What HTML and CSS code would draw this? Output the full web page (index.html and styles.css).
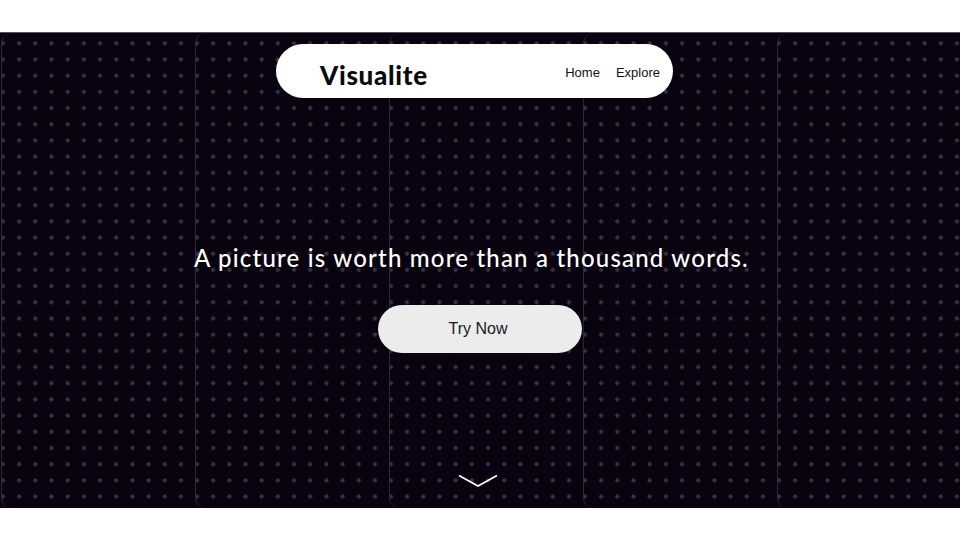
FILE: index.html
```html
<!DOCTYPE html>
<html lang="en">
<head>
<meta charset="utf-8">
<title>Visualite</title>
<link rel="stylesheet" href="styles.css">
</head>
<body>
<section class="hero">
  <div class="panels">
    <div class="panel"></div>
    <div class="panel"></div>
    <div class="panel"></div>
    <div class="panel"></div>
    <div class="panel"></div>
  </div>
  <div class="content">
    <nav class="navbar">
      <span class="brand">Visualite</span>
      <div class="links">
        <a class="link" href="#">Home</a>
        <a class="link" href="#">Explore</a>
      </div>
    </nav>
    <h1 class="headline">A picture is worth more than a thousand words.</h1>
    <button class="cta">Try Now</button>
    <svg class="chevron" width="40" height="14" viewBox="0 0 40 14">
      <polyline points="1,1.5 20,12 39,1.5" fill="none" stroke="#ffffff" stroke-width="1.6"/>
    </svg>
  </div>
</section>
</body>
</html>
```
FILE: styles.css
```css
* { box-sizing: border-box; }
html, body { margin: 0; padding: 0; background: #ffffff; }
body { padding-top: 32px; height: 540px; overflow: hidden; }

.hero {
  display: grid;
  grid-template-columns: minmax(0, 1fr);
  height: 476px;
  background: #08030f;
  border-top: 1px solid #55535e;
  overflow: hidden;
}

.panels {
  grid-area: 1 / 1;
  display: flex;
  padding-left: 1px;
  width: 980px;
}

.panel {
  flex: 0 0 194px;
  height: 100%;
  border-left: 1px solid #2a2736;
  border-radius: 10px 0 0 10px;
  background-image: radial-gradient(circle, #37324b 1.8px, transparent 2.3px);
  background-size: 16.2px 16.2px;
  background-position: 9px 2.2px;
}

.content {
  grid-area: 1 / 1;
  display: flex;
  flex-direction: column;
  align-items: center;
}

.navbar {
  margin-top: 11px;
  margin-right: 11px;
  width: 397px;
  height: 54px;
  background: #ffffff;
  border-radius: 27px;
  display: flex;
  align-items: center;
  justify-content: space-between;
  padding: 0 13px 0 44px;
}

.brand {
  font-family: "Lato", sans-serif;
  font-weight: 900;
  font-size: 26px;
  color: #0a0a0a;
  padding-top: 8px;
  letter-spacing: 0.7px;
}

.links { display: flex; gap: 16px; padding-top: 2px; }

.link {
  font-family: "Liberation Sans", Arial, sans-serif;
  font-size: 13px;
  color: #111111;
  text-decoration: none;
}

.headline {
  margin: 145px 17px 0 0;
  font-family: "Lato", sans-serif;
  font-weight: 500;
  font-size: 24px;
  line-height: 30px;
  color: #ffffff;
  letter-spacing: 1.2px;
  word-spacing: 0;
}

.cta {
  margin-top: 32px;
  width: 204px;
  height: 48px;
  border: none;
  border-radius: 24px;
  background: #ececec;
  font-family: "Liberation Sans", Arial, sans-serif;
  font-size: 16px;
  color: #1a1a1a;
  padding: 0 4px 0 0;
}

.chevron {
  margin-top: 121px;
  margin-right: 4px;
  display: block;
}
```
